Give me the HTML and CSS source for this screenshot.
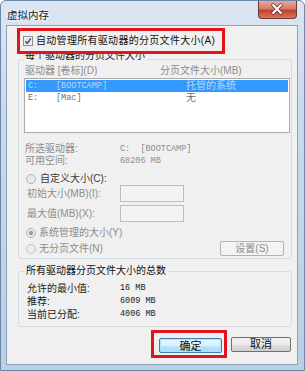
FILE: index.html
```html
<!DOCTYPE html>
<html>
<head>
    <meta charset="UTF-8">
    <title>虚拟内存</title>
    <link rel="stylesheet" href="styles.css">
</head>
<body>
<div class="window">
    <div class="titlebar">
        <span class="title">虚拟内存</span>
        <span class="close">
            <svg width="39" height="18" viewBox="0 0 39 18">
                <path d="M15.5 5 L23.5 13 M23.5 5 L15.5 13" stroke="#6b2a22" stroke-width="3.6" stroke-linecap="round"/>
                <path d="M15.5 5 L23.5 13 M23.5 5 L15.5 13" stroke="#fff" stroke-width="2.2" stroke-linecap="round"/>
            </svg>
        </span>
    </div>
    <div class="client">
        <!-- 红框标注 -->
        <div class="mark auto">
            <svg class="check" width="10" height="10" viewBox="0 0 10 10">
                <rect x="0.5" y="0.5" width="9" height="9" fill="#f4f4f4" stroke="#8e8f8f"/>
                <rect x="2" y="2" width="6" height="6" fill="#e2e6ea"/>
                <path d="M2.3 5.2 L4.2 7.4 L7.9 2.4" fill="none" stroke="#3b4f7e" stroke-width="1.5"/>
            </svg>
            <span>自动管理所有驱动器的分页文件大小(A)</span>
        </div>

        <div class="group drives">
            <div class="legend">每个驱动器的分页文件大小</div>
            <div class="cols">
                <span class="col1">驱动器 [卷标](D)</span>
                <span>分页文件大小(MB)</span>
            </div>
            <div class="list">
                <div class="row sel">
                    <span class="drv mono">C:</span><span class="vol mono">[BOOTCAMP]</span><span>托管的系统</span>
                </div>
                <div class="row">
                    <span class="drv mono">E:</span><span class="vol mono">[Mac]</span><span>无</span>
                </div>
            </div>

            <div class="info first"><span class="lbl">所选驱动器:</span><span class="mono">C:  [BOOTCAMP]</span></div>
            <div class="info"><span class="lbl">可用空间:</span><span class="mono">68206 MB</span></div>

            <div class="opt custom">
                <svg class="radio" width="10" height="10" viewBox="0 0 10 10">
                    <circle cx="5" cy="5" r="4.5" fill="#e9e9e9" stroke="#b4b4b4"/>
                </svg>
                <span>自定义大小(C):</span>
            </div>
            <div class="size">
                <span class="lbl">初始大小(MB)(I):</span><span class="field"></span>
            </div>
            <div class="size second">
                <span class="lbl">最大值(MB)(X):</span><span class="field"></span>
            </div>
            <div class="opt sys">
                <svg class="radio" width="10" height="10" viewBox="0 0 10 10">
                    <circle cx="5" cy="5" r="4.5" fill="#ececec" stroke="#b4b4b4"/>
                    <circle cx="5" cy="5" r="2.2" fill="#9a9a9a"/>
                </svg>
                <span>系统管理的大小(Y)</span>
            </div>
            <div class="opt none">
                <svg class="radio" width="10" height="10" viewBox="0 0 10 10">
                    <circle cx="5" cy="5" r="4.5" fill="#ececec" stroke="#c0c0c0"/>
                </svg>
                <span>无分页文件(N)</span>
                <span class="btn set">设置(S)</span>
            </div>
        </div>

        <div class="group total">
            <div class="legend">所有驱动器分页文件大小的总数</div>
            <div class="sum first"><span class="lbl">允许的最小值:</span><span class="mono">16 MB</span></div>
            <div class="sum"><span class="lbl">推荐:</span><span class="mono">6009 MB</span></div>
            <div class="sum"><span class="lbl">当前已分配:</span><span class="mono">4006 MB</span></div>
        </div>

        <div class="actions">
            <div class="mark okmark"><span class="btn ok">确定</span></div>
            <span class="btn cancel">取消</span>
        </div>
    </div>
</div>
</body>
</html>
```

FILE: styles.css
```css
*{
    margin: 0;
    padding: 0;
    box-sizing: border-box;
}
body{
    font-family: "Liberation Sans", "Noto Sans CJK SC", sans-serif;
    font-size: 10px;
    color: #1e1e1e;
    background: #fff;
}
.window{
    width: 305px;
    height: 371px;
    border: 1px solid #6b86a6;
    border-radius: 6px 6px 0 0;
    padding: 0 6px 5px 5px;
    background: linear-gradient(180deg, #dbe6f2 0%, #c9daec 30%, #b9cfe6 100%);
}
.titlebar{
    height: 24px;
    display: flex;
    align-items: flex-start;
}
.title{
    margin: 8px 0 0 1px;
    line-height: 12px;
    font-size: 10.5px;
    color: #222;
    text-shadow: 0 0 5px #fff, 0 0 3px #fff;
}
.close{
    margin-left: auto;
    margin-right: 1px;
    width: 39px;
    height: 18px;
    border: 1px solid #6e3a34;
    border-top: none;
    border-radius: 0 0 4px 4px;
    background: linear-gradient(180deg, #e9a99b 0%, #d57b68 45%, #c0422f 55%, #d8765d 100%);
    display: flex;
}
.close svg{
    margin: -1px 0 0 -1px;
}
.client{
    height: 340px;
    border: 1px solid #8ea2bc;
    background: #f0f0f0;
    padding: 0 5px 0 11px;
}
.mono{
    font-family: "Liberation Mono", monospace;
    font-size: 8.5px;
    white-space: pre;
}
.lbl{
    width: 95px;
    flex: none;
}
/* 红框 */
.mark{
    border: 3px solid #e3141b;
    position: relative;
    z-index: 1;
}
.auto{
    margin: 2px 0 0 -1px;
    width: 208px;
    height: 26px;
    background: #f0f0f0;
    display: flex;
    align-items: center;
    padding-left: 3px;
    line-height: 12px;
    color: #111;
    letter-spacing: 0.3px;
}
.check{
    margin-right: 3px;
}
.group{
    border: 1px solid #d3dce3;
    border-radius: 3px;
    padding: 0 1px 0 5px;
}
.legend{
    width: fit-content;
    line-height: 12px;
    padding: 0 2px 0 1px;
    background: #f0f0f0;
    color: #1a1a1a;
}
.drives{
    margin-top: 5px;
    padding-bottom: 2px;
}
.drives .legend{
    margin-top: -10px;
}
.cols{
    margin-top: 3px;
    height: 12px;
    line-height: 12px;
    color: #8d8d8d;
    padding-left: 1px;
    display: flex;
}
.col1{
    width: 135px;
}
.list{
    margin-top: 1px;
    height: 55px;
    border: 1px solid #a9adb1;
    background: #fff;
    padding: 1px 1px 0;
}
.row{
    height: 12px;
    line-height: 12px;
    display: flex;
    align-items: center;
    color: #707070;
    padding-left: 2px;
}
.row.sel{
    background: #3399ff;
    color: #b9d6f7;
}
.drv{
    width: 28px;
}
.vol{
    width: 130px;
}
.info, .sum{
    display: flex;
    align-items: center;
    height: 12px;
    line-height: 12px;
    color: #8d8d8d;
    padding-left: 1px;
}
.info.first{
    margin-top: 10px;
}
.opt{
    display: flex;
    align-items: center;
    height: 12px;
    line-height: 12px;
    color: #8d8d8d;
    padding-left: 2px;
}
.radio{
    margin-right: 3px;
}
.custom{
    margin-top: 6px;
    color: #3a3a3a;
}
.custom .radio{
    margin-right: 4px;
}
.size{
    display: flex;
    align-items: center;
    height: 17px;
    line-height: 12px;
    color: #8d8d8d;
    padding-left: 3px;
}
.size .lbl{
    width: 93px;
}
.size.second{
    margin-top: 3px;
}
.field{
    width: 64px;
    height: 17px;
    border: 1px solid #bdbdbd;
    background: #f3f3f3;
}
.sys{
    margin-top: 5px;
}
.none{
    margin-top: 2px;
    height: 15px;
}
.btn{
    display: flex;
    align-items: center;
    justify-content: center;
    height: 15px;
    border-radius: 2px;
    line-height: 12px;
}
.set{
    margin: 0 6px 0 auto;
    width: 64px;
    border: 1px solid #adb2b5;
    background: #f4f4f4;
    color: #8a8a8a;
}
.total{
    margin-top: 12px;
    padding: 0 1px 5px 8px;
}
.total .legend{
    margin: -7px 0 0 -2px;
    color: #111;
}
.sum{
    height: 13px;
    line-height: 13px;
    color: #222;
    padding-left: 0;
}
.sum.first{
    margin-top: 5px;
}
.sum .lbl{
    width: 93px;
}
.actions{
    margin-top: 3px;
    display: flex;
    justify-content: flex-end;
    align-items: center;
    padding-right: 1px;
}
.okmark{
    padding: 5px 2px 2px 5px;
}
.ok{
    width: 63px;
    border: 1px solid #3c7fb1;
    background: linear-gradient(180deg, #eaf6fd 0%, #d9f0fc 50%, #bee6fd 51%, #a7d9f5 100%);
    box-shadow: inset 0 0 0 1px #aee3f9;
    font-size: 11px;
    color: #111;
}
.cancel{
    margin-left: 4px;
    width: 60px;
    border: 1px solid #707070;
    background: linear-gradient(180deg, #f2f2f2 0%, #ebebeb 50%, #dddddd 51%, #cfcfcf 100%);
    font-size: 11px;
    color: #111;
}
```
